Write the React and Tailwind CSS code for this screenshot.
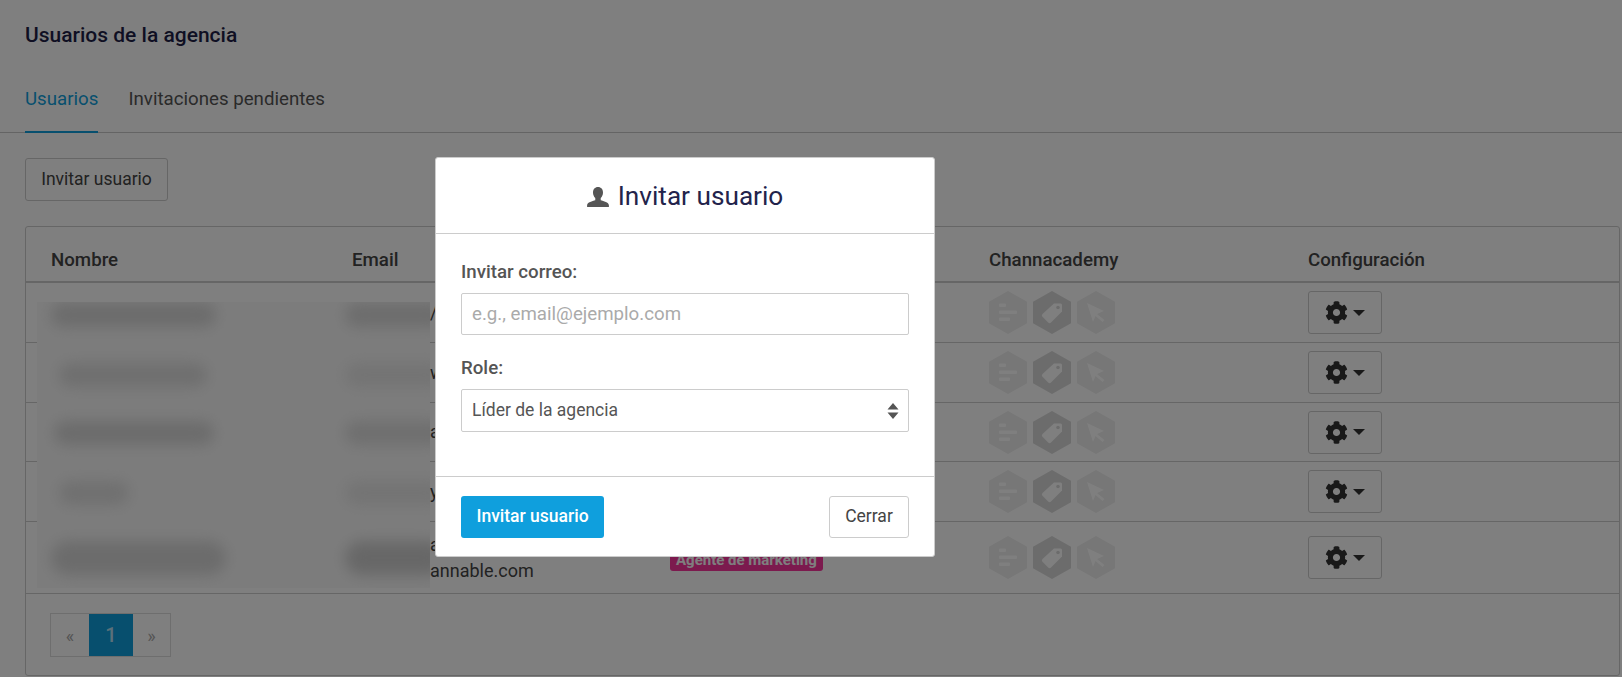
import { FaCog } from 'react-icons/fa';

const rows = [
    { mail: '/' },
    { mail: 'w' },
    { mail: 'a' },
    { mail: 'y' },
    { mail: 'a', second: 'annable.com', badge: 'Agente de marketing' },
];

// row heights are not even in the original table
const rowHeights = ['h-[60px]', 'h-[60px]', 'h-[59px]', 'h-[60px]', 'h-[72px]'];

// smudges over names and emails
const smudges = [
    { row: 'mt-[1px] h-[24px]', name: 'w-[165px] bg-[#d8d8d8]', mail: 'bg-[#dadada]' },
    { row: 'mt-[36px] h-[24px]', name: 'ml-[8px] w-[148px] bg-[#dedede]', mail: 'bg-[#e8e8e8]' },
    { row: 'mt-[34px] h-[24px]', name: 'ml-[3px] w-[160px] bg-[#d8d8d8]', mail: 'bg-[#dedede]' },
    { row: 'mt-[36px] h-[24px]', name: 'ml-[8px] w-[70px] bg-[#e0e0e0]', mail: 'bg-[#e8e8e8]' },
    { row: 'mt-[36px] h-[34px]', name: 'w-[175px] bg-[#d8d8d8]', mail: 'bg-[#cfcfcf]' },
];

const Hex = ({ fill, children }) => (
    <svg viewBox="0 0 38 43" className="h-[43px] w-[38px]">
        <polygon points="19,0 38,10.750 38,32.250 19,43 0,32.250 0,10.750" fill={fill} />
        {children}
    </svg>
);

const AcademyIcons = () => (
    <div className="flex items-center gap-[6px]">
        <Hex fill="#eeeeee">
            <g fill="#ffffff">
                <rect x="10" y="12.500" width="7" height="3.500" rx="1" />
                <rect x="10" y="19.500" width="18" height="3.500" rx="1" />
                <rect x="10" y="26.500" width="11" height="3.500" rx="1" />
            </g>
        </Hex>
        <Hex fill="#d9d9d9">
            <path d="M21 12.500h6.500a1.500 1.500 0 0 1 1.500 1.500v6.500L18 31.500a2 2 0 0 1-2.800 0l-5.700-5.700a2 2 0 0 1 0-2.800z" fill="#ffffff" />
            <circle cx="25" cy="16.500" r="1.800" fill="#d9d9d9" />
        </Hex>
        <Hex fill="#eeeeee">
            <path d="M10 12l17 8-7 3 7.500 6-2 2-7-6-2.500 6z" fill="#ffffff" />
        </Hex>
    </div>
);

const App = () => {
    return (
        <div className="relative h-[677px] w-[1622px] overflow-hidden bg-white font-['Roboto',sans-serif] text-[#444444]">
            <div className="px-[25px] pt-[23px] text-[21px] font-medium leading-[24px] text-[#1f1f47]">
                Usuarios de la agencia
            </div>

            {/* Tabs */}
            <div className="mt-[27px] flex gap-[30px] border-b border-[#c8c8c8] px-[25px] text-[18.700px]">
                <div className="-mb-px border-b-2 border-[#0f9fdd] pb-[20px] pt-[13px] leading-[24px] text-[#0f9fdd]">Usuarios</div>
                <div className="pb-[20px] pt-[13px] leading-[24px] text-[#555555]">Invitaciones pendientes</div>
            </div>

            <div className="pl-[25px]">
                <button className="mt-[25px] h-[43px] w-[143px] rounded-[3px] border border-[#cccccc] text-[17.500px] text-[#444444]">
                    Invitar usuario
                </button>

                {/* Users table */}
                <div className="mt-[25px] h-[450px] w-[1595px] rounded-[3px] border border-[#cccccc]">
                    <div className="flex h-[56px] items-center border-b-2 border-[#cccccc] pt-[12px] text-[18.700px] font-medium">
                        <div className="w-[326px] pl-[25px]">Nombre</div>
                        <div className="w-[637px]">Email</div>
                        <div className="w-[319px]">Channacademy</div>
                        <div>Configuración</div>
                    </div>

                    {rows.map((row, i) => (
                        <div key={i} className={`flex items-center border-b border-[#cccccc] ${rowHeights[i]}`}>
                            <div className="w-[326px]" />
                            <div className="w-[318px] pl-[78px] text-[18px] leading-[26px]">
                                <div>{row.mail}</div>
                                {row.second && <div>{row.second}</div>}
                            </div>
                            <div className="w-[319px] pt-[4px]">
                                {row.badge && (
                                    <span className="inline-block rounded-[3px] bg-[#f8349c] px-[6px] text-[15px] font-bold leading-[22px] text-white">
                                        {row.badge}
                                    </span>
                                )}
                            </div>
                            <div className="w-[319px]">
                                <AcademyIcons />
                            </div>
                            <button className="flex h-[43px] w-[74px] items-center justify-center gap-[5px] rounded-[3px] border border-[#cccccc] text-[#333333]">
                                <FaCog className="text-[23px]" />
                                <span className="border-x-[6px] border-t-[6px] border-x-transparent border-t-[#333333]" />
                            </button>
                        </div>
                    ))}

                    {/* Pagination */}
                    <div className="ml-[24px] mt-[19px] flex h-[44px] w-[121px] border border-[#dddddd] text-[18px] text-[#aaaaaa]">
                        <div className="flex w-[38px] items-center justify-center">«</div>
                        <div className="flex w-[44px] items-center justify-center bg-[#0f9fdd] text-[20px] font-medium text-white/70">1</div>
                        <div className="flex flex-1 items-center justify-center">»</div>
                    </div>
                </div>
            </div>

            {/* Blurred patch over names and emails */}
            <div className="absolute left-[37px] top-[302px] h-[286px] w-[393px] overflow-hidden bg-[#f9f9f9]">
                {smudges.map((s, i) => (
                    <div key={i} className={`relative ${s.row}`}>
                        <div className={`absolute left-[14px] h-full rounded-full blur-[7px] ${s.name}`} />
                        <div className={`absolute left-[308px] h-full w-[100px] rounded-full blur-[7px] ${s.mail}`} />
                    </div>
                ))}
            </div>

            {/* Backdrop */}
            <div className="absolute inset-0 bg-black/50" />

            {/* Invite modal */}
            <div className="absolute left-[435px] top-[157px] w-[500px] rounded-[3px] border border-[#cccccc] bg-white">
                <div className="flex h-[76px] items-center justify-center gap-[9px] border-b border-[#cccccc] pt-[2px] text-[26.200px] text-[#23234b]">
                    <svg viewBox="0 0 24 22" className="h-[20px] w-[22px]" fill="#555555">
                        <path d="M12 0c3.400 0 5.500 2.500 5.500 6 0 2.500-1 4.600-2.500 6v2.500c3 1 9 2 9 5.500v2H0v-2c0-3.500 6-4.500 9-5.500V12C7.500 10.600 6.500 8.500 6.500 6 6.500 2.500 8.600 0 12 0z" />
                    </svg>
                    <span>Invitar usuario</span>
                </div>

                <div className="h-[242px] px-[25px] pt-[26px]">
                    <label className="block text-[18.700px] font-medium leading-[24px] text-[#555555]">Invitar correo:</label>
                    <input
                        placeholder="e.g., email@ejemplo.com"
                        className="mt-[9px] h-[42px] w-full rounded-[2px] border border-[#cccccc] px-[10px] text-[18.700px] placeholder:text-[#aaaaaa]"
                    />
                    <label className="mt-[21px] block text-[18.700px] font-medium leading-[24px] text-[#555555]">Role:</label>
                    <div className="mt-[9px] flex h-[43px] items-center justify-between rounded-[2px] border border-[#cccccc] pl-[10px] pr-[9px] text-[17.500px] text-[#555555]">
                        <span>Líder de la agencia</span>
                        <svg viewBox="0 0 12 16" className="h-[16px] w-[12px]" fill="#555555">
                            <path d="M6 0l5.500 6.500H.5zM6 16L.5 9.500h11z" />
                        </svg>
                    </div>
                </div>

                <div className="flex h-[80px] items-center justify-between border-t border-[#cccccc] px-[25px]">
                    <button className="h-[42px] w-[143px] rounded-[3px] bg-[#0f9fdd] text-[17.500px] font-medium text-white">Invitar usuario</button>
                    <button className="h-[42px] w-[80px] rounded-[3px] border border-[#cccccc] text-[17.500px] text-[#444444]">Cerrar</button>
                </div>
            </div>
        </div>
    );
};

export default App;
